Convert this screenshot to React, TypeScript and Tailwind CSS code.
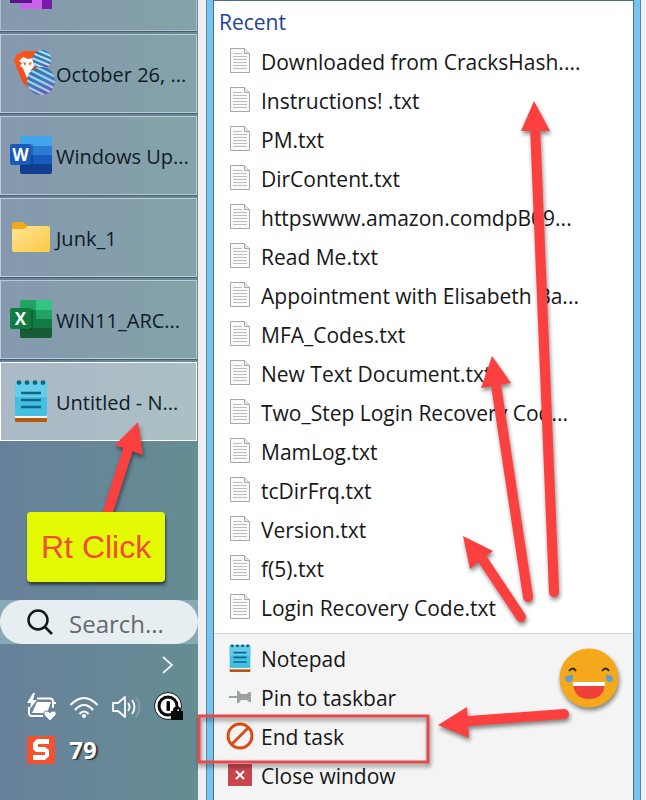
import type { ReactNode } from 'react';

function NotepadIcon({ className }: { className: string }) {
  return (
    <svg viewBox="0 0 34 42" className={className} aria-hidden="true" preserveAspectRatio="none">
      <rect x="1" y="36" width="32" height="6" rx="1" fill="#b8580d" />
      <rect x="1" y="35" width="32" height="3" fill="#f2f5f6" />
      <rect x="1" y="2" width="32" height="34" rx="1" fill="#43bfe3" />
      <rect x="1" y="2" width="32" height="15" rx="1" fill="#62cdea" />
      {[5, 13, 21, 29].map((x) => (
        <circle key={x} cx={x} cy="2.6" r="2.4" fill="#136781" />
      ))}
      <path d="M7 13h20M7 20h20M7 27h20" stroke="#136781" strokeWidth="2.4" />
    </svg>
  );
}

function OneNoteIcon() {
  return (
    <svg viewBox="0 0 42 10" className="h-[10px] w-[42px]" aria-hidden="true">
      <path d="M10 0h32v9H10z" fill="#7719aa" />
      <path d="M10 0h22v9H10z" fill="#ca64ea" />
      <path d="M10 0h12v3H0V0z" fill="#5c1390" />
    </svg>
  );
}

function BraveIcon() {
  return (
    <svg viewBox="0 0 42 46" className="h-[46px] w-[42px]" aria-hidden="true">
      <defs>
        <linearGradient id="shield" x1="0" y1="0" x2="1" y2="1">
          <stop offset="0" stopColor="#ff5a1c" />
          <stop offset="1" stopColor="#e8401a" />
        </linearGradient>
        <linearGradient id="stripeFill" x1="0" y1="0" x2="0.4" y2="1">
          <stop offset="0" stopColor="#1276a8" />
          <stop offset="0.6" stopColor="#3c7fc0" />
          <stop offset="1" stopColor="#6b5bb5" />
        </linearGradient>
        <clipPath id="avatarHead">
          <circle cx="28" cy="9.5" r="9.5" />
        </clipPath>
        <clipPath id="avatarBody">
          <circle cx="27" cy="31" r="14" />
        </clipPath>
      </defs>
      <path d="M9 1h14l5 10-4 32-6-2-9-8L3 19 0 11q1-6 4-7z" fill="url(#shield)" />
      <path d="M5 11l4-4 5 2 6-1 2 6-5 6 1 4-5 4-3-7-1-3-3-2 2-3z" fill="#fff" />
      <path d="M9 12l3 1-1 3zM15 13l3-1-2 4z" fill="#ee4c20" />
      <g clipPath="url(#avatarHead)">
        <path d="M18 0h20v20H18z" fill="url(#stripeFill)" />
        <path d="M16-3l26 11M16 2l26 11M16 7l26 11M16 12l26 11" stroke="#b9e1ee" strokeWidth="2" />
      </g>
      <g clipPath="url(#avatarBody)">
        <path d="M12 16h30v30H12z" fill="url(#stripeFill)" />
        <path
          d="M12 12l32 16M12 18l32 16M12 24l32 16M12 30l32 16M12 36l32 16"
          stroke="#a9cde8"
          strokeWidth="2.2"
        />
      </g>
    </svg>
  );
}

function OfficeIcon({ letter, colors }: { letter: string; colors: string[] }) {
  const [top, upper, lower, bottom, tile] = colors;
  return (
    <svg viewBox="0 0 42 38" className="h-[38px] w-[42px]" aria-hidden="true">
      <defs>
        <clipPath id={`sheet-${letter}`}>
          <rect x="10" width="32" height="38" rx="2" />
        </clipPath>
      </defs>
      <g clipPath={`url(#sheet-${letter})`}>
        <path d="M10 0h32v10H10z" fill={top} />
        <path d="M10 10h32v9H10z" fill={upper} />
        <path d="M10 19h32v9H10z" fill={lower} />
        <path d="M10 28h32v10H10z" fill={bottom} />
        {letter === 'X' && (
          <>
            <path d="M10 0h16v10H10z" fill="#21a366" />
            <path d="M10 10h16v18H10z" fill="#107c41" />
            <path d="M10 28h16v10H10z" fill="#185c37" />
          </>
        )}
        <path d="M10 8h13v22H10z" fill="#000" opacity=".18" />
      </g>
      <rect y="8" width="21" height="21" rx="2" fill={tile} />
      <text
        x="10.5"
        y="24.500"
        textAnchor="middle"
        fill="#fff"
        fontSize="17"
        fontWeight="700"
        fontFamily="Open Sans, sans-serif"
      >
        {letter}
      </text>
    </svg>
  );
}

function FolderIcon() {
  return (
    <svg viewBox="0 0 38 30" className="mx-0.5 h-[30px] w-[38px]" aria-hidden="true">
      <defs>
        <linearGradient id="folder" x1="0" y1="0" x2="1" y2="1">
          <stop offset="0" stopColor="#ffe594" />
          <stop offset="1" stopColor="#fcc844" />
        </linearGradient>
      </defs>
      <path d="M0 2q0-2 2-2h9l5 4h20v8H0z" fill="#efa91c" />
      <path d="M0 8q0-1 1-1h11l4-3h20q2 0 2 2v22q0 2-2 2H2q-2 0-2-2z" fill="url(#folder)" />
    </svg>
  );
}

function PageIcon() {
  return (
    <svg viewBox="0 0 20 26" className="h-[26px] w-5" aria-hidden="true">
      <path d="M.5.5h14l5 5v19H.5z" fill="#fafafa" stroke="#a8a8a8" />
      <path d="M14.500.5v5h5" fill="#e8e8e8" stroke="#a8a8a8" />
      <path d="M3 5.500h9M3 8.500h14M3 11.500h14M3 14.500h14M3 17.500h14M3 20.500h14" stroke="#bcbcbc" />
    </svg>
  );
}

const tasks: { label: string; icon: ReactNode; active?: boolean }[] = [
  { label: 'October 26, ...', icon: <span className="pl-1"><BraveIcon /></span> },
  {
    label: 'Windows Up...',
    icon: <OfficeIcon letter="W" colors={['#41a5ee', '#2b7cd3', '#185abd', '#103f91', '#185abd']} />,
  },
  { label: 'Junk_1', icon: <FolderIcon /> },
  {
    label: 'WIN11_ARC...',
    icon: <OfficeIcon letter="X" colors={['#33c481', '#21a366', '#107c41', '#185c37', '#107c41']} />,
  },
  { label: 'Untitled - N...', icon: <NotepadIcon className="mx-1 h-[42px] w-[34px]" />, active: true },
];

const recent = [
  'Downloaded from CracksHash....',
  'Instructions! .txt',
  'PM.txt',
  'DirContent.txt',
  'httpswww.amazon.comdpB09...',
  'Read Me.txt',
  'Appointment with Elisabeth Ba...',
  'MFA_Codes.txt',
  'New Text Document.txt',
  'Two_Step Login Recovery Cod...',
  'MamLog.txt',
  'tcDirFrq.txt',
  'Version.txt',
  'f(5).txt',
  'Login Recovery Code.txt',
];

function TaskBar() {
  return (
    <aside className="flex w-[198px] shrink-0 flex-col bg-linear-to-r from-[#67809a] to-[#658d93]">
      <div className="mr-px flex h-[31px] items-start border border-t-0 border-[#aebfca] bg-white/20 pl-[9px]">
        <OneNoteIcon />
      </div>
      <ul className="mr-px">
        {tasks.map((task) => (
          <li key={task.label} className="border-t border-[#466078] pt-0.5">
            <button
              type="button"
              className={
                task.active
                  ? 'flex h-[79px] w-full items-center border border-white bg-white/45 pl-[9px] text-left'
                  : 'flex h-[79px] w-full items-center border border-[#bccbd4] bg-white/20 pl-[9px] text-left'
              }
            >
              <span className="flex w-[46px] shrink-0 pb-0.5">{task.icon}</span>
              <span className="pt-0.5 text-xl whitespace-nowrap text-[#0d1c28]">{task.label}</span>
            </button>
          </li>
        ))}
      </ul>
      <div className="mt-[159px] bg-[#89a9b7]">
        <label className="flex h-11 items-center gap-4 rounded-full bg-[#e7eef2] pl-[27px]">
          <svg viewBox="0 0 26 26" className="size-[26px] shrink-0" fill="none" stroke="#10181c" strokeWidth="2.500">
            <circle cx="11" cy="11" r="9.500" />
            <path d="M17.500 17.500 25 25" />
          </svg>
          <input
            type="text"
            aria-label="Search"
            placeholder="Search..."
            className="w-full min-w-0 bg-transparent pt-1 text-2xl outline-none placeholder:text-[#65696d]"
          />
        </label>
      </div>
      <button type="button" aria-label="Show hidden icons" className="mt-3 mr-6 self-end">
        <svg viewBox="0 0 12 18" className="h-[18px] w-3" fill="none" stroke="#e9f0f2" strokeWidth="1.800">
          <path d="M1 1l9 8-9 8" />
        </svg>
      </button>
      <div className="mt-[18px] grid grid-cols-4 items-center gap-x-3 gap-y-3.5 pr-3.5 pl-[27px]">
        <svg viewBox="0 0 30 28" className="h-7 w-[30px]" fill="none" stroke="#fff" strokeWidth="2" aria-hidden="true">
          <path d="M10 5.500h13q3 0 3 3V15M2 14v6q0 3 3 3h11M26 10h3M1 17h2" />
          <path d="M10 9h14l-4 11H5z" fill="#fff" stroke="none" />
          <path d="M6 0L0 10h4l-1 6 7-9H6l2-7z" fill="#fff" stroke="none" />
          <path
            d="M23 28l-6-6q-1-4 3-4 2 0 3 2 1-2 3-2 4 0 3 4z"
            fill="#fff"
            stroke="#66869a"
            strokeWidth="1"
          />
        </svg>
        <svg viewBox="0 0 30 28" className="h-7 w-[30px]" fill="none" stroke="#fff" strokeWidth="2.200" aria-hidden="true">
          <path d="M1.500 12q13.500-14 27 0M6 17q9-10 18 0M10.500 21q4.500-5 9 0" />
          <circle cx="15" cy="23" r="2" fill="#fff" stroke="none" />
        </svg>
        <svg viewBox="0 0 30 28" className="h-7 w-[30px]" fill="none" stroke="#fff" strokeWidth="1.800" aria-hidden="true">
          <path d="M1 10h5l7-6v20l-7-6H1z" strokeLinejoin="round" />
          <path d="M16 10q3 4 0 8M20 7q5 7 0 14" />
          <path d="M24 4q7 10 0 20" opacity=".2" />
        </svg>
        <svg viewBox="0 0 30 30" className="h-[30px] w-[30px]" aria-hidden="true">
          <circle cx="14" cy="14" r="13.500" fill="#fff" stroke="#111" />
          <circle cx="14" cy="14" r="9" fill="#fff" stroke="#080808" strokeWidth="3" />
          <rect x="12.500" y="9" width="3.500" height="10" rx="1" fill="#080808" />
          <path d="M17 19h12v9H17z" fill="#080808" />
          <path d="M20 19v-1q0-2.500 3-2.500T26 18v1" fill="none" stroke="#080808" strokeWidth="2" />
        </svg>
        <svg viewBox="0 0 28 28" className="size-7" aria-hidden="true">
          <rect width="28" height="28" rx="2" fill="#f3512f" />
          <path d="M22 3H10L6 7v6l3 3h9v3H6v5h12l4-4v-6l-4-3h-7V8h11z" fill="#fff" />
        </svg>
        <span className="text-2xl leading-7 font-bold text-white [text-shadow:2px_1px_1px_#333]">79</span>
      </div>
    </aside>
  );
}

function MenuRow({ icon, children }: { icon: ReactNode; children: ReactNode }) {
  return (
    <li>
      <button type="button" className="flex h-[39px] w-full items-center text-left">
        <span className="flex w-[47px] shrink-0 items-center justify-center pb-[3px] pl-1">{icon}</span>
        <span className="whitespace-nowrap">{children}</span>
      </button>
    </li>
  );
}

function JumpList() {
  return (
    <div className="flex flex-1 flex-col border-x border-t border-[#526f7e] bg-white text-[21px] text-[#171717]">
      <h2 className="h-[42px] pl-[5px] leading-[42px] text-[#1c429c]">Recent</h2>
      <ul className="pb-[5px]">
        {recent.map((name) => (
          <MenuRow key={name} icon={<PageIcon />}>
            {name}
          </MenuRow>
        ))}
      </ul>
      <ul className="flex-1 border-t border-[#d7d7d7] bg-[#f4f4f4] pt-1.5">
        <MenuRow icon={<NotepadIcon className="h-7 w-[22px]" />}>Notepad</MenuRow>
        <MenuRow
          icon={
            <svg viewBox="0 0 22 12" className="h-3 w-[22px]" fill="#98a2a4" aria-hidden="true">
              <path d="M0 5h8V0h2l2 3h6l2-2h2v10h-2l-2-2h-6l-2 3H8V7H0z" />
            </svg>
          }
        >
          Pin to taskbar
        </MenuRow>
        <MenuRow
          icon={
            <svg viewBox="0 0 28 28" className="size-7" fill="none" stroke="#d94e16" strokeWidth="3" aria-hidden="true">
              <circle cx="14" cy="14" r="12" />
              <path d="M6 22 22 6" />
            </svg>
          }
        >
          End task
        </MenuRow>
        <MenuRow
          icon={
            <svg viewBox="0 0 24 22" className="h-[22px] w-6" aria-hidden="true">
              <path d="M0 0h24v22H0z" fill="#c7464e" />
              <path d="m8 7 8 8m0-8-8 8" stroke="#fff" strokeWidth="2" />
            </svg>
          }
        >
          Close window
        </MenuRow>
      </ul>
    </div>
  );
}

function Annotations() {
  return (
    <div className="pointer-events-none absolute top-0 left-0">
      <svg viewBox="0 0 646 800" className="h-[800px] w-[646px]" aria-hidden="true">
        <g className="drop-shadow-[1px_3px_2px_#0007]">
          <g fill="#fc4040" stroke="#fc4040">
            <g strokeWidth="10" strokeLinecap="round">
              <path d="M106 518 131 440M554 592 535 125M528 597 496 385M521 617 483 560M564 714 468 721" />
            </g>
            <g stroke="none">
              <path d="M138 422 143 455 115 445zM534 101 550 131 521 131zM492 356 511 383 481 388zM463 536 493 551 470 569zM438 725 467 707 469 738z" />
            </g>
          </g>
          <path d="M199 716h229v46H199z" fill="none" stroke="#e84a4a" strokeWidth="3" />
          <circle cx="589" cy="678" r="29.500" fill="#f5a81c" />
        </g>
        <path d="M569 671q4-5 7 0M602 671q4-5 7 0" fill="none" stroke="#30291f" strokeWidth="2" />
        <path d="M573 675q-8 0-8 4 1 4 5 3 4-2 3-7zM606 675q8 0 7 4-1 4-5 3-3-2-2-7z" fill="#62a0d2" />
        <path d="M573 683h32q-1 16-16 16t-16-16z" fill="#ef403c" />
        <path d="M573 682h32v4h-32z" fill="#fff" />
      </svg>
      <div className="absolute top-[512px] left-[27px] rounded-sm bg-[#e4fa02] px-3.5 py-[17px] font-['Liberation_Sans',Arial,sans-serif] text-[32px] leading-9 whitespace-nowrap text-[#f34a3c] shadow-[1px_3px_3px_#0008]">
        Rt Click
      </div>
    </div>
  );
}

export default function App() {
  return (
    <main className="relative flex min-h-screen overflow-hidden bg-[#efeff1] font-['Open_Sans','Noto_Sans',sans-serif]">
      <TaskBar />
      <section className="ml-2 flex flex-1 border-x border-[#5788a3] bg-[#74c5f1] pr-1.5 pl-1.5">
        <JumpList />
      </section>
      <div className="w-[5px] shrink-0" />
      <Annotations />
    </main>
  );
}
